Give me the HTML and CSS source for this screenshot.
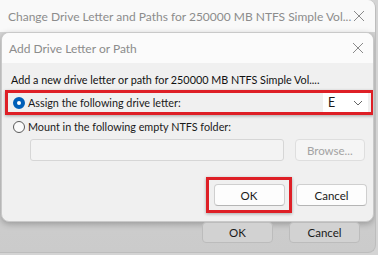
FILE: index.html
```html
<!DOCTYPE html>
<html lang="en">
<head>
    <meta charset="UTF-8">
    <title>Add Drive Letter or Path</title>
    <link rel="stylesheet" href="styles.css">
</head>
<body>
    <div class="window">
        <div class="win-title">
            <span class="win-title-text">Change Drive Letter and Paths for 250000 MB NTFS Simple Vol...</span>
            <svg class="close" width="12" height="12" viewBox="0 0 12 12"><path d="M1 1L11 11M11 1L1 11" stroke="#8a8a8a" stroke-width="1"/></svg>
        </div>

        <div class="dialog">
            <div class="dlg-title">
                <span class="dlg-title-text">Add Drive Letter or Path</span>
                <svg class="close" width="12" height="12" viewBox="0 0 12 12"><path d="M1 1L11 11M11 1L1 11" stroke="#8a8a8a" stroke-width="1"/></svg>
            </div>
            <div class="dlg-body">
                <p class="intro">Add a new drive letter or path for 250000 MB NTFS Simple Vol....</p>

                <div class="highlight row-assign">
                    <span class="radio checked"></span>
                    <span class="label">Assign the following drive letter:</span>
                    <div class="select">
                        <span>E</span>
                        <svg width="10" height="6" viewBox="0 0 10 6"><path d="M1 1L5 5L9 1" fill="none" stroke="#666" stroke-width="1"/></svg>
                    </div>
                </div>

                <div class="row-mount">
                    <span class="radio"></span>
                    <span class="label">Mount in the following empty NTFS folder:</span>
                </div>

                <div class="row-folder">
                    <div class="folder-input"></div>
                    <button class="btn disabled">Browse...</button>
                </div>

                <div class="actions">
                    <div class="highlight ok-wrap">
                        <button class="btn">OK</button>
                    </div>
                    <button class="btn">Cancel</button>
                </div>
            </div>
        </div>

        <div class="win-footer">
            <button class="btn back">OK</button>
            <button class="btn back">Cancel</button>
        </div>
    </div>
</body>
</html>
```

FILE: styles.css
```css
* {
    margin: 0;
    padding: 0;
    box-sizing: border-box;
}

body {
    width: 378px;
    height: 255px;
    overflow: hidden;
    background: #d4d4d4;
    font-family: Lato, "Noto Sans", sans-serif;
    font-size: 10.8px;
    color: #1a1a1a;
}

.window {
    width: 376px;
    height: 253px;
    background: linear-gradient(to bottom, #d6d6d6, #cbcbcb);
    border-right: 1px solid #bdbdbd;
    border-bottom: 1px solid #bdbdbd;
    border-radius: 0 8px 8px 0;
    overflow: hidden;
}

/* Title bars */
.win-title {
    height: 32px;
    background: #f9f9f9;
    display: flex;
    align-items: center;
    justify-content: space-between;
    padding: 0 10px 0 8px;
    font-size: 12px;
    color: #8c8c8c;
    white-space: nowrap;
}

.dialog {
    width: 373px;
    margin-left: 1px;
    background: #f0f0f0;
    border: 1px solid #c9c9c9;
    border-radius: 8px;
    box-shadow: 0 2px 6px rgba(0, 0, 0, 0.25);
    overflow: hidden;
}

.dlg-title {
    height: 30px;
    background: #fbfbfb;
    display: flex;
    align-items: center;
    justify-content: space-between;
    padding: 0 9px 0 7px;
    font-size: 12px;
    color: #8c8c8c;
}

.dlg-body {
    padding: 9px 0 8px 0;
}

.intro {
    padding-left: 9px;
    line-height: 16px;
    color: #111;
}

/* Red highlight boxes */
.highlight {
    border: 3px solid #de1f26;
    box-shadow: 0 1px 3px rgba(0, 0, 0, 0.3);
}

.row-assign {
    margin: 2px 0 0 3px;
    width: 369px;
    height: 25px;
    display: flex;
    align-items: center;
    padding: 0 3px 0 5px;
}

.row-mount {
    margin-top: 4px;
    height: 16px;
    display: flex;
    align-items: center;
    padding-left: 11px;
}

.label {
    margin-left: 3px;
    line-height: 16px;
}

.radio {
    width: 12px;
    height: 12px;
    border-radius: 50%;
    border: 1px solid #5a5a5a;
    background: #fbfbfb;
    flex-shrink: 0;
}

.radio.checked {
    border: 4px solid #005fb8;
    background: #fff;
}

.select {
    margin-left: auto;
    width: 45px;
    height: 19px;
    background: #fff;
    display: flex;
    align-items: center;
    justify-content: space-between;
    padding: 0 5px 0 5px;
    font-size: 12.5px;
}

/* Folder row */
.row-folder {
    margin-top: 4px;
    display: flex;
    padding: 0 8px 0 28px;
    gap: 11px;
}

.folder-input {
    width: 256px;
    height: 22px;
    border: 1px solid #d6d6d6;
    border-radius: 3px;
    background: #f3f3f3;
}

.btn {
    width: 71px;
    height: 22px;
    font-family: inherit;
    font-size: 11.5px;
    color: #1a1a1a;
    background: #fdfdfd;
    border: 1px solid #cfcfcf;
    border-bottom-color: #b5b5b5;
    border-radius: 4px;
}

.btn.disabled {
    color: #a3a3a3;
    background: #f5f5f5;
    border-color: #dedede;
}

.actions {
    margin-top: 16px;
    display: flex;
    align-items: center;
    padding-left: 204px;
    gap: 4px;
}

.ok-wrap {
    width: 86px;
    height: 36px;
    display: flex;
    align-items: center;
    justify-content: center;
}

/* Back window footer */
.win-footer {
    display: flex;
    gap: 16px;
    padding: 0 0 0 202px;
}

.btn.back {
    width: 71px;
    height: 21px;
    background: #d2d2d2;
    border-color: #bcbcbc;
}
```
